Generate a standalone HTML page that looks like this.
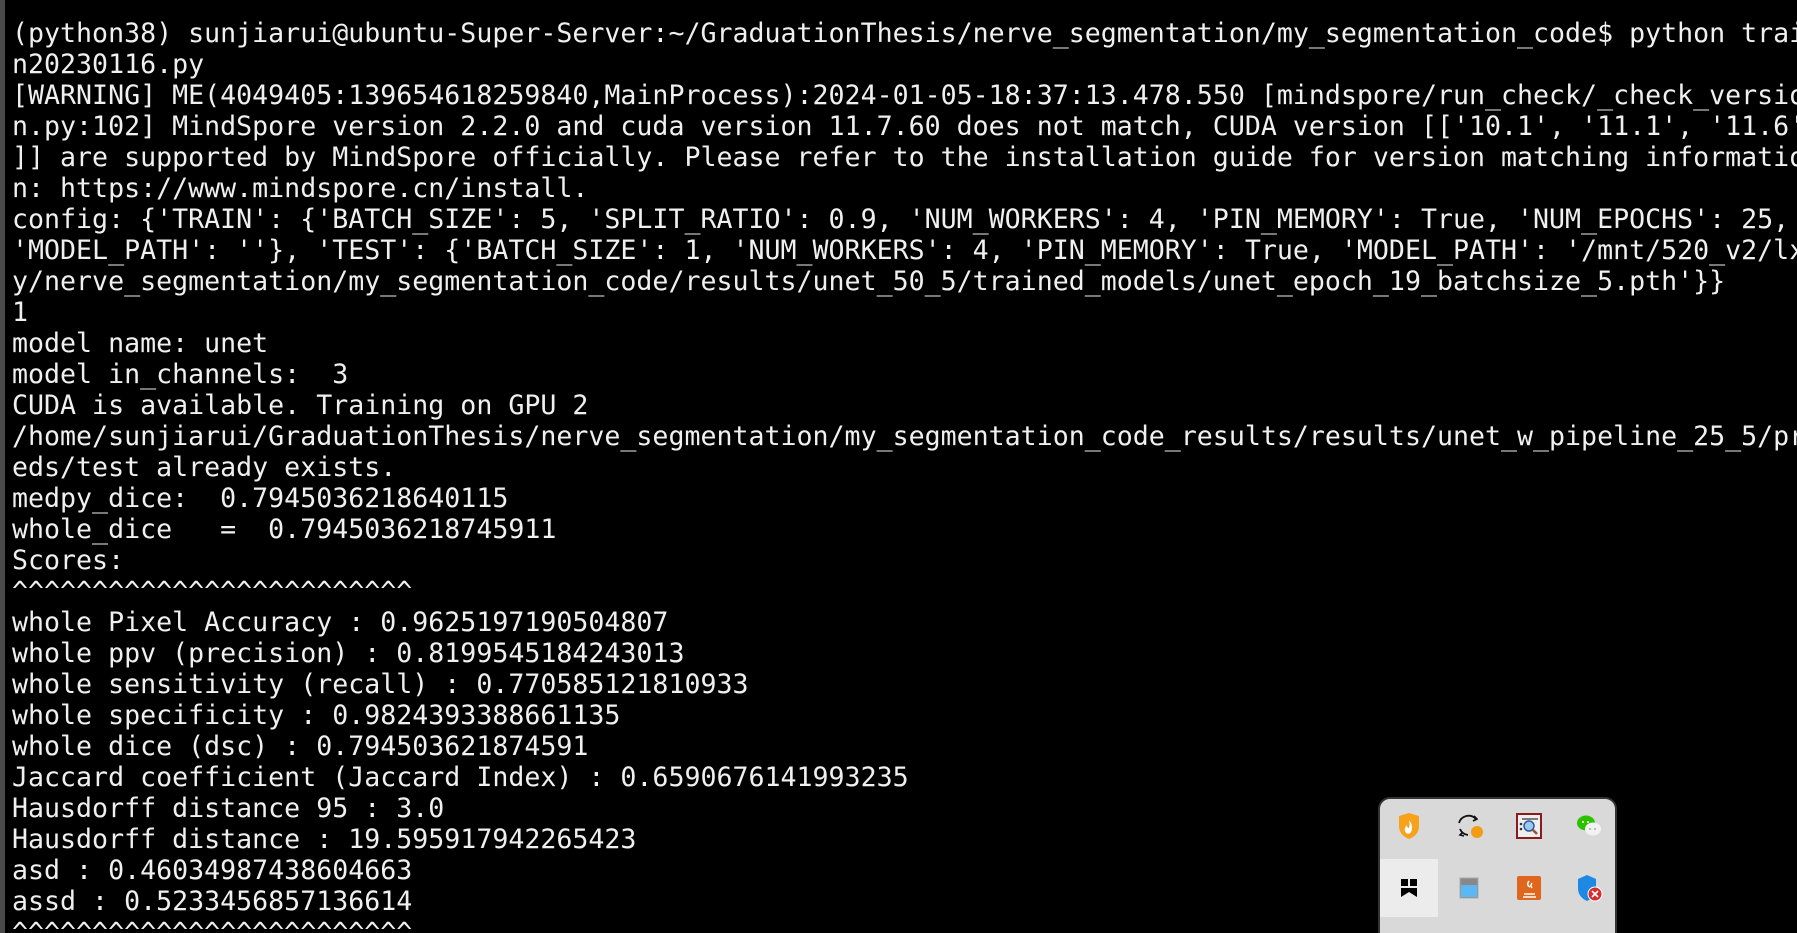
<!DOCTYPE html>
<html><head><meta charset="utf-8"><style>
html,body{margin:0;padding:0;background:#000;width:1797px;height:933px;overflow:hidden;position:relative}
.bar{position:absolute;left:0;top:0;width:5px;height:933px;background:#4a4a4a}
pre{position:absolute;left:12px;top:18px;margin:0;font-family:"DejaVu Sans Mono","Liberation Mono",monospace;font-size:26.6px;line-height:31px;color:#f0f0f0;white-space:pre;width:1785px;overflow:hidden}
.pop{position:absolute;left:1378px;top:797px;width:235px;height:150px;background:#d9d9d9;border:2px solid #333;border-radius:12px;overflow:hidden}
.hl{position:absolute;left:0;top:60px;width:58px;height:58px;background:#ececec}
.ic{position:absolute;width:30px;height:30px}
</style></head><body>
<div class="bar"></div>
<pre>(python38) sunjiarui@ubuntu-Super-Server:~/GraduationThesis/nerve_segmentation/my_segmentation_code$ python trai
n20230116.py
[WARNING] ME(4049405:139654618259840,MainProcess):2024-01-05-18:37:13.478.550 [mindspore/run_check/_check_versio
n.py:102] MindSpore version 2.2.0 and cuda version 11.7.60 does not match, CUDA version [['10.1', '11.1', '11.6'
]] are supported by MindSpore officially. Please refer to the installation guide for version matching informatio
n: https://www.mindspore.cn/install.
config: {'TRAIN': {'BATCH_SIZE': 5, 'SPLIT_RATIO': 0.9, 'NUM_WORKERS': 4, 'PIN_MEMORY': True, 'NUM_EPOCHS': 25, 
'MODEL_PATH': ''}, 'TEST': {'BATCH_SIZE': 1, 'NUM_WORKERS': 4, 'PIN_MEMORY': True, 'MODEL_PATH': '/mnt/520_v2/lx
y/nerve_segmentation/my_segmentation_code/results/unet_50_5/trained_models/unet_epoch_19_batchsize_5.pth'}}
1
model name: unet
model in_channels:  3
CUDA is available. Training on GPU 2
/home/sunjiarui/GraduationThesis/nerve_segmentation/my_segmentation_code_results/results/unet_w_pipeline_25_5/pr
eds/test already exists.
medpy_dice:  0.7945036218640115
whole_dice   =  0.7945036218745911
Scores:
^^^^^^^^^^^^^^^^^^^^^^^^^
whole Pixel Accuracy : 0.9625197190504807
whole ppv (precision) : 0.8199545184243013
whole sensitivity (recall) : 0.770585121810933
whole specificity : 0.9824393388661135
whole dice (dsc) : 0.794503621874591
Jaccard coefficient (Jaccard Index) : 0.6590676141993235
Hausdorff distance 95 : 3.0
Hausdorff distance : 19.595917942265423
asd : 0.46034987438604663
assd : 0.5233456857136614
^^^^^^^^^^^^^^^^^^^^^^^^^</pre>
<div class="pop">
<div class="hl"></div>
<svg class="ic" style="left:14px;top:12px" viewBox="0 0 30 30"><path d="M5 5 L15 2 L25 5 L25 15 Q25 24 15 28 Q5 24 5 15Z" fill="#f7a21b"/><path d="M15 9 Q20 15 17 21 Q15 24 12 22 Q9 18 13 14 Q13 17 15 17 Q16 13 15 9Z" fill="#fff"/></svg>
<svg class="ic" style="left:74px;top:12px" viewBox="0 0 30 30"><path d="M22 8 A10 10 0 0 0 5 12" fill="none" stroke="#111" stroke-width="1.8"/><path d="M6 18 A10 10 0 0 0 14 24" fill="none" stroke="#111" stroke-width="1.8"/><path d="M20 5 L23 8 L19 10" fill="none" stroke="#111" stroke-width="1.6"/><path d="M9 21 L6 24 L10 25" fill="none" stroke="#111" stroke-width="1.6"/><circle cx="23" cy="21" r="6" fill="#f39c12"/></svg>
<svg class="ic" style="left:134px;top:12px" viewBox="0 0 30 30"><rect x="3" y="3" width="24" height="24" fill="#eee" stroke="#8b1a1a" stroke-width="2"/><line x1="8" y1="8" x2="24" y2="8" stroke="#555" stroke-width="1.5"/><circle cx="7" cy="13" r="1.3" fill="#333"/><circle cx="7" cy="18" r="1.3" fill="#333"/><circle cx="15" cy="15" r="5" fill="#9cc8f0" stroke="#2d5c9a" stroke-width="1.5"/><line x1="19" y1="19" x2="23" y2="23" stroke="#a0522d" stroke-width="2.5"/></svg>
<svg class="ic" style="left:194px;top:12px" viewBox="0 0 30 30"><ellipse cx="12" cy="12" rx="9" ry="7.5" fill="#2dc100"/><ellipse cx="19" cy="18" rx="8" ry="6.5" fill="#f2f2f2"/><circle cx="16" cy="18" r="1" fill="#aaa"/><circle cx="21" cy="18" r="1" fill="#aaa"/><circle cx="9" cy="11" r="1" fill="#fff"/><circle cx="14" cy="11" r="1" fill="#fff"/></svg>
<svg class="ic" style="left:14px;top:74px" viewBox="0 0 30 30"><rect x="7" y="6" width="7" height="7" fill="#000"/><rect x="16" y="6" width="7" height="7" fill="#000"/><path d="M7 15 H23 V24 L15 19 L7 24Z" fill="#000"/></svg>
<svg class="ic" style="left:74px;top:74px" viewBox="0 0 30 30"><rect x="6" y="5" width="18" height="20" fill="#888" stroke="#aaa"/><rect x="7" y="12" width="16" height="12" fill="#5bb8f5"/></svg>
<svg class="ic" style="left:134px;top:74px" viewBox="0 0 30 30"><rect x="3" y="3" width="24" height="24" rx="2" fill="#e0661e"/><path d="M10 21 H21 M9 24 H22 M15 8 Q12 12 16 14 M18 10 Q16 13 18 15" stroke="#fff" stroke-width="1.5" fill="none"/></svg>
<svg class="ic" style="left:194px;top:74px" viewBox="0 0 30 30"><path d="M4 6 L13 2 L22 6 L22 15 Q22 24 13 28 Q4 24 4 15Z" fill="#1e88e5"/><circle cx="21" cy="21" r="7" fill="#d32f2f" stroke="#fff" stroke-width="1"/><path d="M18 18 L24 24 M24 18 L18 24" stroke="#fff" stroke-width="1.6"/></svg>
</div>
</body></html>
